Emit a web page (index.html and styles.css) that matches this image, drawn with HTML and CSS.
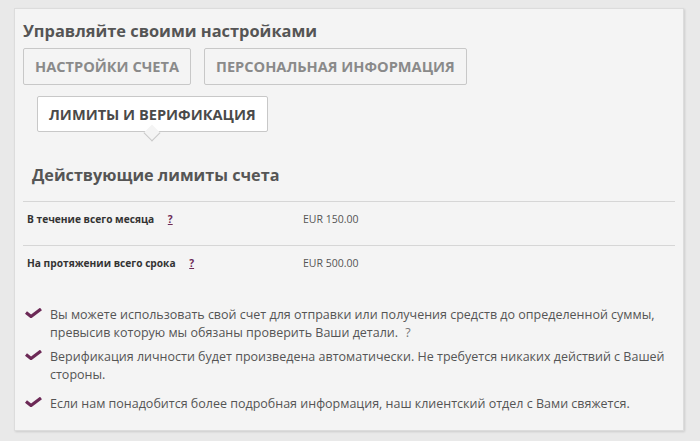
FILE: index.html
```html
<!DOCTYPE html>
<html lang="ru">
<head>
<meta charset="utf-8">
<link rel="stylesheet" href="styles.css">
</head>
<body>
<div class="panel">
  <h1 class="title">Управляйте своими настройками</h1>
  <div class="tabs">
    <div class="tab-row">
      <span class="tab">НАСТРОЙКИ СЧЕТА</span>
      <span class="tab">ПЕРСОНАЛЬНАЯ ИНФОРМАЦИЯ</span>
    </div>
    <div class="tab-row second">
      <span class="tab active">ЛИМИТЫ И ВЕРИФИКАЦИЯ</span>
    </div>
  </div>
  <h2 class="subtitle">Действующие лимиты счета</h2>
  <div class="limits">
    <div class="limit-row">
      <span class="limit-label">В течение всего месяца <span class="q">?</span></span>
      <span class="limit-value">EUR 150.00</span>
    </div>
    <div class="limit-row">
      <span class="limit-label">На протяжении всего срока <span class="q">?</span></span>
      <span class="limit-value">EUR 500.00</span>
    </div>
  </div>
  <ul class="checks">
    <li><svg class="tick" viewBox="0 0 17 10" width="17" height="10"><path d="M1 4.5 L6 8.5 L16 1" fill="none" stroke="#6c2956" stroke-width="3.2" stroke-linejoin="miter"/></svg><p class="item-text">Вы можете использовать свой счет для отправки или получения средств до определенной суммы, превысив которую мы обязаны проверить Ваши детали. <span class="qs">?</span></p></li>
    <li><svg class="tick" viewBox="0 0 17 10" width="17" height="10"><path d="M1 4.5 L6 8.5 L16 1" fill="none" stroke="#6c2956" stroke-width="3.2" stroke-linejoin="miter"/></svg><p class="item-text">Верификация личности будет произведена автоматически. Не требуется никаких действий с Вашей стороны.</p></li>
    <li><svg class="tick" viewBox="0 0 17 10" width="17" height="10"><path d="M1 4.5 L6 8.5 L16 1" fill="none" stroke="#6c2956" stroke-width="3.2" stroke-linejoin="miter"/></svg><p class="item-text">Если нам понадобится более подробная информация, наш клиентский отдел с Вами свяжется.</p></li>
  </ul>
</div>
</body>
</html>
```
FILE: styles.css
```css
html, body {
  margin: 0;
  padding: 0;
}
body {
  background: #e9e9e9;
  font-family: "Open Sans", "Noto Sans", sans-serif;
  color: #555;
  width: 700px;
  height: 441px;
  overflow: hidden;
}
.panel {
  box-sizing: border-box;
  margin: 8px 0 0 14px;
  width: 670px;
  height: 423px;
  background: #f4f4f4;
  border: 1px solid #dcdcdc;
  box-shadow: 1px 1px 2px rgba(0,0,0,0.12);
  padding: 11px 8px 0 8px;
}
.title {
  margin: 0;
  font-size: 16.4px;
  font-weight: 700;
  color: #555;
  line-height: 22px;
}
.tabs {
  margin-top: 6px;
}
.tab-row {
  display: flex;
  gap: 13px;
}
.tab-row.second {
  margin-top: 11px;
  padding-left: 14px;
}
.tab {
  position: relative;
  box-sizing: border-box;
  height: 37px;
  line-height: 35px;
  padding: 0 11px;
  border: 1px solid #c8c8c8;
  border-radius: 2px;
  background: #f4f4f4;
  font-size: 14.6px;
  font-weight: 700;
  color: #8a8a8a;
}
.tab.active {
  background: #fff;
  color: #4a4a4a;
  height: 36px;
}
.tab.active::after {
  content: "";
  position: absolute;
  left: 50%;
  bottom: -8px;
  width: 11px;
  height: 11px;
  margin-left: -6px;
  background: #f4f4f4;
  border-right: 1px solid #c8c8c8;
  border-bottom: 1px solid #c8c8c8;
  transform: rotate(45deg);
}
.subtitle {
  margin: 32px 0 0 9px;
  font-size: 16.2px;
  font-weight: 700;
  color: #555;
  line-height: 22px;
}
.limits {
  margin-top: 15px;
}
.limit-row {
  display: flex;
  align-items: flex-start;
  height: 44px;
  border-top: 1px solid #d6d6d6;
  padding: 10px 0 0 4px;
  box-sizing: border-box;
  font-size: 10.2px;
  line-height: 14px;
}
.limit-row + .limit-row {
  height: 42px;
  padding-top: 10px;
}
.limit-label {
  width: 276px;
  font-weight: 700;
  color: #333;
}
.limit-value {
  color: #555;
  font-size: 10.5px;
}
.q {
  color: #6c2956;
  text-decoration: underline;
  margin-left: 11px;
}
.checks {
  list-style: none;
  margin: 19px 0 0 0;
  padding: 0 0 0 2px;
}
.checks li {
  display: flex;
  gap: 8px;
  font-size: 12.5px;
  line-height: 18px;
  color: #555;
  margin-bottom: 6px;
}
.checks li:nth-child(2) {
  margin-bottom: 11px;
}
.item-text {
  margin: 0;
}
.tick {
  flex: none;
  margin-top: 2px;
}
.qs {
  color: #777;
  margin-left: 4px;
}
```
